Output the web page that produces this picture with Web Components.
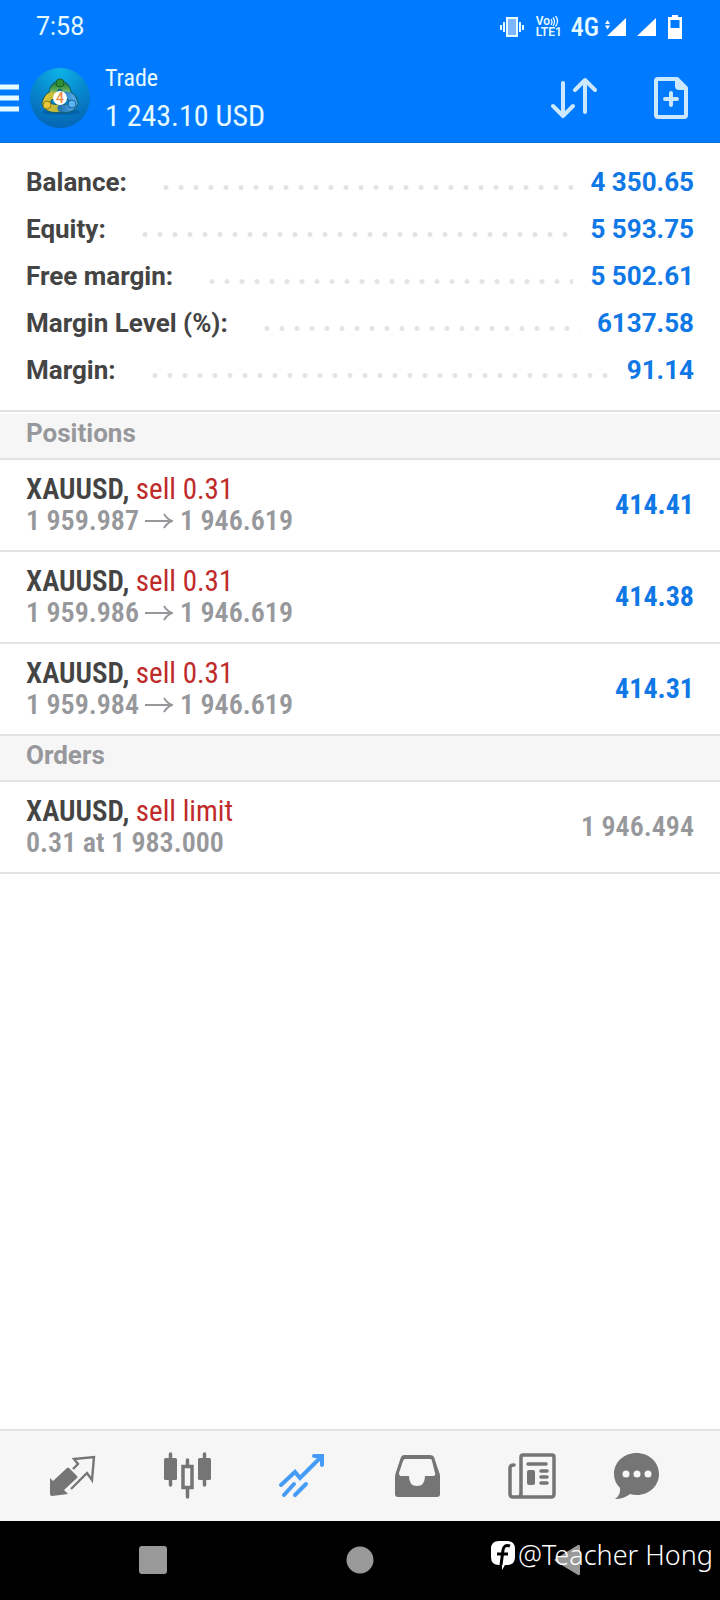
<!DOCTYPE html>
<html lang="en">
<head>
<meta charset="utf-8">
<meta name="viewport" content="width=device-width, initial-scale=1">
<title>Trade</title>
<style>
  html, body { margin: 0; }
  body {
    --blue: #007aff;
    --value: #0f78e6;
    --ink: #444;
    --muted: #97989b;
    --red: #bf2a2a;
    --line: #e3e3e3;
    --panel: #f6f6f6;
    --condensed: "Roboto Condensed", Roboto, "Liberation Sans", sans-serif;
    font-family: Roboto, "Liberation Sans", sans-serif;
    color: var(--ink);
    background: #fff;
  }
</style>
</head>
<body>
<trade-app></trade-app>
<script>
const define = (name, html) => {
  const template = document.createElement('template');
  template.innerHTML = html;
  customElements.define(name, class extends HTMLElement {
    constructor() {
      super();
      this.attachShadow({ mode: 'open' }).append(template.content.cloneNode(true));
    }
  });
};

define('status-bar', `
<style>
  :host { display: flex; align-items: center; height: 54px; padding: 0 36px; background: var(--blue); color: #e6fbff; }
  svg { display: block; flex: none; }
  .time { font-size: 25px; line-height: 30px; margin-right: auto; }
  .volte { display: flex; flex-direction: column; width: 27px; margin: 0 8px 0 12px; font-size: 12px; line-height: 11px; font-weight: 600; }
  .volte span { display: flex; }
  .net { font: 500 26px/28px var(--condensed); margin-right: 6px; }
  .sim { margin-right: 11px; }
</style>
<span class="time">7:58</span>
<svg width="24" height="20" viewBox="0 0 24 20"><rect x="7" y="1" width="10" height="18" fill="#7db6ff" stroke="#e6fbff" stroke-width="2"/><path d="M4 5v10M20 5v10M1 8v5M23 8v5" stroke="#e6fbff" stroke-width="2"/></svg>
<span class="volte"><span>Vo<svg width="9" height="11" viewBox="0 0 9 11" fill="none" stroke="#e6fbff" stroke-width="1.3"><path d="M1 3q2 3 0 6M3 1.500q3 4 0 8.500M5.500 0q4 5 0 10.500"/></svg></span><span>LTE1</span></span>
<span class="net">4G</span>
<svg class="sim" width="21" height="20" viewBox="0 0 21 20" fill="#fff"><path d="M21 1v18H2zM0 7l2.500-4L5 7zM0 8.500h5l-2.500 4z"/></svg>
<svg width="19" height="20" viewBox="0 0 19 20" fill="#fff" class="sim"><path d="M19 1v18H0z"/></svg>
<svg width="17" height="24" viewBox="0 0 17 24"><path fill="#fff" fill-rule="evenodd" d="M5 0h6v2h4v22H1V2h4zM3.500 5v8h9V5z"/></svg>
`);

define('app-header', `
<style>
  :host { display: flex; align-items: center; height: 88px; padding-right: 31px; border-bottom: 1px solid #0b6fd6; background: var(--blue); color: #e6fbff; font-family: var(--condensed); }
  button { display: block; padding: 0; border: 0; background: none; }
  svg { display: block; }
  .logo { margin: 0 15px 0 11px; }
  .titles { flex: 1; }
  h1, p { margin: 0; font-weight: 400; }
  h1 { font-size: 24px; line-height: 36px; }
  p { font-size: 30px; line-height: 40px; }
  .sort { margin-right: 54px; }
</style>
<button aria-label="Menu"><svg width="19" height="28" viewBox="0 0 19 28"><path d="M0 3h19M0 14h19M0 25h19" stroke="#e6fbff" stroke-width="5"/></svg></button>
<svg class="logo" width="60" height="60" viewBox="0 0 60 60">
  <defs>
    <radialGradient id="sky" cx=".5" cy="0" r="1"><stop offset="0" stop-color="#0fb4e8"/><stop offset=".5" stop-color="#0789cf"/><stop offset="1" stop-color="#0565b4"/></radialGradient>
    <linearGradient id="green" x2="0" y2="1"><stop stop-color="#2e8a3c"/><stop offset="1" stop-color="#8fd07a"/></linearGradient>
    <linearGradient id="gold"><stop stop-color="#d9c43a"/><stop offset="1" stop-color="#b5b53a"/></linearGradient>
    <linearGradient id="azure"><stop stop-color="#2475b8"/><stop offset="1" stop-color="#52aae8"/></linearGradient>
  </defs>
  <circle cx="30" cy="30" r="30" fill="url(#sky)"/>
  <ellipse cx="31" cy="44" rx="19" ry="3" fill="#045090" opacity=".5"/>
  <g fill="none" stroke-linecap="round">
    <g stroke="#16606a" stroke-width="9"><path d="M23 27q0-9 7-10 7 1 7 10"/><path d="M29 40q-10 2-13-5 2-8 8-8"/><path d="M31 40q10 2 13-5-2-8-8-8"/></g>
    <path d="M23 27q0-9 7-10 7 1 7 10" stroke="url(#green)" stroke-width="7"/>
    <path d="M29 40q-10 2-13-5 2-8 8-8" stroke="url(#gold)" stroke-width="7"/>
    <path d="M31 40q10 2 13-5-2-8-8-8" stroke="url(#azure)" stroke-width="7"/>
  </g>
  <circle cx="30" cy="15" r="4" fill="#2f8f35" stroke="#155c2a"/>
  <circle cx="17" cy="37" r="4" fill="#e8c63a" stroke="#8a7a1c"/>
  <circle cx="42" cy="36" r="4" fill="#5ab4f0" stroke="#1763a0"/>
  <circle cx="30" cy="30" r="7" fill="#fff"/>
  <text x="30" y="35" text-anchor="middle" font-family="Roboto, sans-serif" font-weight="500" font-size="14" fill="#f08a3c">4</text>
</svg>
<div class="titles"><h1>Trade</h1><p>1 243.10 USD</p></div>
<button class="sort" aria-label="Sort"><svg width="48" height="48" viewBox="0 0 48 48" fill="none" stroke="#cbe8ff" stroke-width="4" stroke-linecap="round" stroke-linejoin="round"><path d="M12 9v33M2 32l10 10 10-10M34 38V6M24 16L34 6l10 10"/></svg></button>
<button aria-label="New order"><svg width="36" height="44" viewBox="0 0 36 44"><path d="M5 3h19l9 9v27q0 2-2 2H5q-2 0-2-2V5q0-2 2-2z" fill="none" stroke="#cbe8ff" stroke-width="4" stroke-linejoin="round"/><path d="M22 3v7q0 4 4 4h7v-3l-8-8z" fill="#cbe8ff"/><path d="M18 17v12M12 23h12" stroke="#cbe8ff" stroke-width="4" stroke-linecap="round"/></svg></button>
`);

define('summary-row', `
<style>
  :host { display: flex; align-items: center; height: 47px; font-size: 26px; line-height: 32px; font-weight: 700; white-space: nowrap; }
  .dots { flex: 1; height: 5px; margin: 11px 17px 0 36px; background: radial-gradient(circle at 3px 50%, #e4e4e4 2px, transparent 3px) 0 0 / 15px 5px repeat-x; }
  .value { color: var(--value); }
</style>
<slot></slot><span class="dots"></span><span class="value"><slot name="value"></slot></span>
`);

define('section-title', `
<style>
  :host { display: block; height: 44px; padding: 0 26px; border-bottom: 2px solid var(--line); background: var(--panel); }
  h2 { margin: 0; font-size: 26px; line-height: 38px; font-weight: 700; color: var(--muted); }
</style>
<h2><slot></slot></h2>
`);

define('deal-row', `
<style>
  :host { display: flex; align-items: center; justify-content: space-between; height: 90px; padding: 0 26px; border-bottom: 2px solid var(--line); font: 600 29px/32px var(--condensed); white-space: nowrap; }
  .side { color: var(--red); font-weight: 400; }
  .detail, .value { font-size: 28px; color: var(--muted); }
  :host([profit]) .value { color: var(--value); font-weight: 700; }
</style>
<div>
  <div><slot name="symbol"></slot>, <span class="side"><slot name="side"></slot></span></div>
  <div class="detail"><slot></slot></div>
</div>
<div class="value"><slot name="value"></slot></div>
`);

define('price-arrow', `
<style>:host { display: inline-block; margin: 0 7px 0 6px; } svg { display: block; }</style>
<svg width="28" height="18" viewBox="0 0 28 18" fill="none" stroke="#97989b" stroke-width="2"><path d="M0 9h27M19 2q3 5 8 7-5 2-8 7"/></svg>
`);

define('tab-bar', `
<style>
  nav { display: grid; grid-template-columns: repeat(5, 115fr) 93fr; align-items: center; justify-items: center; height: 90px; padding: 0 38px 0 14px; border-top: 2px solid var(--line); background: var(--panel); color: #757575; }
  button { display: block; padding: 0; border: 0; background: none; color: inherit; }
  [aria-current] { color: #459bf5; }
  svg { display: block; }
</style>
<nav>
  <button aria-label="Quotes"><svg width="48" height="48" viewBox="0 0 48 48"><path fill="currentColor" d="M2 26l3 3 14-13q1-1 2 0l8 8q1 1 0 2L16 38l4 4-16 2q-2 0-2-2z"/><path d="M23 37l16-16 5 7 2-23-20 2 4 5-5 5" fill="none" stroke="#f6f6f6" stroke-width="5"/><path d="M23 37l16-16 5 7 2-23-20 2 4 5-5 5" fill="none" stroke="currentColor" stroke-width="2.400"/></svg></button>
  <button aria-label="Charts"><svg width="48" height="48" viewBox="0 0 48 48" fill="none" stroke="currentColor" stroke-width="3.500" stroke-linecap="round"><path d="M7.500 2v31M41.500 2v31M24.500 8v6M24.500 36v9"/><rect x="1" y="6" width="13" height="22" rx="1.500" fill="currentColor" stroke="none"/><rect x="35" y="6" width="13" height="22" rx="1.500" fill="currentColor" stroke="none"/><rect x="20" y="14.500" width="9" height="21"/></svg></button>
  <button aria-label="Trade" aria-current="page"><svg width="48" height="48" viewBox="0 0 48 48" fill="none" stroke="currentColor" stroke-width="4" stroke-linecap="round"><path d="M3 33l14-13 5 6L43 5M36 4h8v9M6 43l10-11M17 43l11-11"/></svg></button>
  <button aria-label="History"><svg width="48" height="48" viewBox="0 0 48 48"><path fill="currentColor" fill-rule="evenodd" d="M11 3h26q3 0 4 2l5 15q1 2 1 4v18q0 3-3 3H5q-3 0-3-3V24l1-4 5-15q1-2 3-2zm1 4q-1 0-2 2L6 21q0 3 2 3h8q0 10 8 10t8-10h8q3 0 2-3L39 9q0-2-2-2z"/></svg></button>
  <button aria-label="News"><svg width="48" height="48" viewBox="0 0 48 48" fill="none" stroke="currentColor" stroke-width="3.500" stroke-linecap="round" stroke-linejoin="round"><path d="M13 44V5q0-2 2-2h29q2 0 2 2v37q0 3-3 3H5q-3 0-3-3V16q0-3 4-3M11 45q2-1 2-4"/><path d="M20 12h18M33 19h6M33 25h6M33 31h6"/><path stroke-width="4" d="M21 20h4v11h-4z"/></svg></button>
  <button aria-label="Messages"><svg width="48" height="48" viewBox="0 0 48 48"><path fill="currentColor" d="M24.500 1C37 1 47 10 47 22s-10 21-22 21q-4 0-7-1-6 5-15 5 6-4 5-11-6-6-6-14C2 10 12 1 24.500 1z"/><g fill="#f6f6f6"><circle cx="14" cy="22" r="3.500"/><circle cx="25" cy="22" r="3.500"/><circle cx="36" cy="22" r="3.500"/></g></svg></button>
</nav>
`);

define('system-nav', `
<style>
  :host { display: block; position: relative; background: #000; color: #fff; }
  nav { display: grid; grid-template-columns: repeat(3, 1fr); place-items: center; height: 77px; padding: 0 50px 2px; }
  button { display: block; padding: 0; border: 0; background: none; }
  svg { display: block; }
  .credit { position: absolute; right: 7px; bottom: 23px; display: flex; align-items: center; gap: 2px; font: 300 27px/44px "Noto Sans", Roboto, sans-serif; white-space: nowrap; }
</style>
<nav>
  <button aria-label="Recent apps"><svg width="30" height="30" viewBox="0 0 30 30"><rect x="1" y="1" width="28" height="28" rx="3" fill="#999"/></svg></button>
  <button aria-label="Home"><svg width="28" height="28" viewBox="0 0 28 28"><circle cx="14" cy="14" r="13.500" fill="#999"/></svg></button>
  <button aria-label="Back"><svg width="28" height="32" viewBox="0 0 28 32"><path d="M25 1q2-1 2 2v26q0 3-2 2L2 17q-1-1 0-2z" fill="#999"/></svg></button>
</nav>
<div class="credit"><svg width="26" height="30" viewBox="0 0 26 30"><path fill="#fff" d="M9 1h8q8 0 8 8v8q0 8-8 8h-2l-3 5v-5H9q-8 0-8-8V9q0-8 8-8z"/><path d="M20 6q-6-2-7 4l-2 15M7 14h11" fill="none" stroke="#000" stroke-width="3"/></svg><span>@Teacher Hong</span></div>
`);

define('trade-app', `
<style>
  :host { display: flex; flex-direction: column; min-height: 100vh; }
  main { flex: 1; }
  .summary { padding: 15px 26px 17px; border-bottom: 2px solid var(--line); margin-bottom: 2px; }
</style>
<header><status-bar></status-bar><app-header></app-header></header>
<main>
  <section class="summary">
    <summary-row>Balance:<span slot="value">4 350.65</span></summary-row>
    <summary-row>Equity:<span slot="value">5 593.75</span></summary-row>
    <summary-row>Free margin:<span slot="value">5 502.61</span></summary-row>
    <summary-row>Margin Level (%):<span slot="value">6137.58</span></summary-row>
    <summary-row>Margin:<span slot="value">91.14</span></summary-row>
  </section>
  <section>
    <section-title>Positions</section-title>
    <deal-row profit><span slot="symbol">XAUUSD</span><span slot="side">sell 0.31</span>1 959.987<price-arrow></price-arrow>1 946.619<span slot="value">414.41</span></deal-row>
    <deal-row profit><span slot="symbol">XAUUSD</span><span slot="side">sell 0.31</span>1 959.986<price-arrow></price-arrow>1 946.619<span slot="value">414.38</span></deal-row>
    <deal-row profit><span slot="symbol">XAUUSD</span><span slot="side">sell 0.31</span>1 959.984<price-arrow></price-arrow>1 946.619<span slot="value">414.31</span></deal-row>
  </section>
  <section>
    <section-title>Orders</section-title>
    <deal-row><span slot="symbol">XAUUSD</span><span slot="side">sell limit</span>0.31 at 1 983.000<span slot="value">1 946.494</span></deal-row>
  </section>
</main>
<tab-bar></tab-bar>
<system-nav></system-nav>
`);
</script>
</body>
</html>
